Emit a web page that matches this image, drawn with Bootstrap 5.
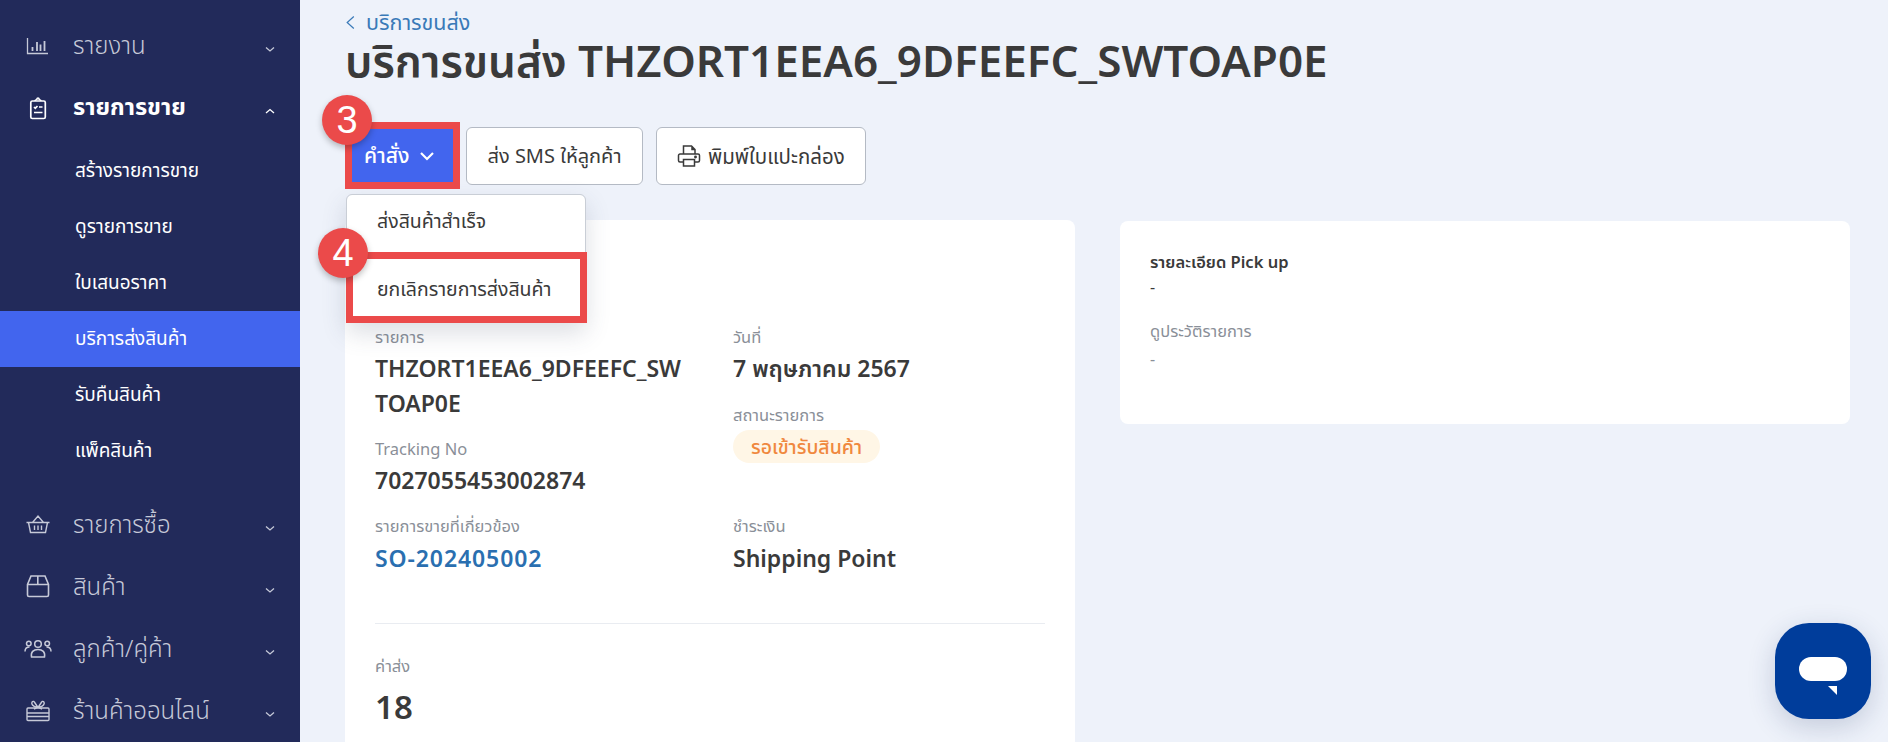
<!DOCTYPE html>
<html lang="th">
<head>
<meta charset="utf-8">
<title>บริการขนส่ง</title>
<link href="https://cdn.jsdelivr.net/npm/bootstrap@5.3.0/dist/css/bootstrap.min.css" rel="stylesheet">
<style>
html,body{height:742px;overflow:hidden}
body{font-family:"Noto Sans","Noto Sans Thai",sans-serif;background:#eef2fa;color:#3a3a3a}
.shell{height:742px;overflow:hidden}
.side{width:300px;flex:none;background:#222a5a;padding-top:15px;height:742px;overflow:hidden}
.top-item{height:62px;padding:0 24px 2px 26px;color:#c6c9d8;font-size:24px;font-weight:300;text-decoration:none}
.top-item.open{color:#fff;font-weight:700;font-size:23.5px}
.top-item .ico{width:24px;height:24px;flex:none;margin:2px 23px 0 0;overflow:visible}
.top-item .chev{width:12px;height:12px;margin:8px 0 0 auto}
.subs{padding:4px 0 15px}
.sub-item{display:flex;align-items:center;height:56px;padding:0 0 2px 75px;color:#fff;font-size:19px;font-weight:400;text-decoration:none}
.sub-item.on{background:#4265ee}
.content{flex:1;padding:10px 38px 0 45px;min-width:0}
.crumb{height:24px;font-size:21.500px;line-height:24px;color:#3a7ab8;text-decoration:none}
.crumb svg{width:11px;height:17px;margin-right:10px}
.page-title{font-size:44px;font-weight:600;line-height:50px;margin:1px 0 42px;color:#3a3a3a;white-space:nowrap}
.tools{gap:13px;height:58px;margin-bottom:35px;margin-left:1px}
.tool{height:58px;font-size:20px;font-weight:400;padding:0 20.500px;border-color:#b4bac4;background:#fff;color:#3a3a3a;border-radius:6px;white-space:nowrap}
.tool-main{background:#4265ee;border-color:#4265ee;color:#fff;font-size:21px;font-weight:500;padding:0 13px 0 17px;width:107px;border-radius:0}
.tool-main:hover{background:#4265ee;color:#fff}
.tool svg{width:24px;height:24px}
.print-btn{gap:7px;font-size:20.500px;padding:0 20px}
.hold{position:relative}
.frame{position:absolute;border:7px solid #eb4a4a;pointer-events:none;z-index:4}
.frame-a{left:-1px;top:-5px;width:115px;height:67px}
.pin{position:absolute;width:50px;height:50px;border-radius:50%;background:#eb4a4a;color:#fff;font-size:38px;display:flex;align-items:center;justify-content:center;box-shadow:0 3px 6px rgba(0,0,0,.25);z-index:5;font-family:"Liberation Sans",sans-serif}
.pin-a{left:-24px;top:-32px}
.pin-b{left:-28px;top:101px}
.menu-drop{display:block;position:absolute;left:0;top:67px;width:240px;height:129px;border-radius:6px;border-color:#c9ced6;padding:0;box-shadow:0 10px 24px rgba(60,70,100,.18);z-index:3}
.menu-line{display:block;height:51px;line-height:51px;padding:0 0 0 30px;font-size:19.500px;font-weight:400;color:#3a3a3a;text-decoration:none;white-space:nowrap}
.frame-b{left:0;top:125px;width:241px;height:71px}
.menu-line2{position:absolute;left:0;top:58px;width:100%;height:71px;line-height:71px;padding-left:30px}
.pane{flex:1 1 0;min-width:0;background:#fff;border:0;border-radius:8px}
.pane-l{padding:107px 30px 30px;height:700px}
.pane-r{padding:31px 30px 0;height:203px;margin-top:1px}
.lab{font-size:16.500px;line-height:20px;color:#8a8f98}
.val{font-size:23px;font-weight:600;line-height:35px;margin-top:3.500px;color:#3a3a3a}
.gap-top{margin-top:18.500px}
.status-lab{margin-top:19.500px}
.row-end .val{margin-top:5px}
.col-one{width:358px;flex:none;padding-right:40px;word-break:break-all}
.state{display:inline-block;background:#fff6e6;color:#f0883e;font-size:19.500px;font-weight:500;line-height:33px;height:33px;padding:0 18px;border-radius:17px;margin-top:5px;white-space:nowrap}
.link-val{color:#2a6fb0;text-decoration:none;letter-spacing:.9px}
.rule{margin:47px 0 32px;border-color:#e9ecf1;opacity:1}
.big-val{font-size:33px;font-weight:600;line-height:48px;margin-top:7px}
.head-r{font-size:16.500px;font-weight:600;line-height:20px}
.plain{font-size:16px;line-height:20px;margin-top:5px}
.chat{position:fixed;left:1775px;top:623px;width:96px;height:96px;background:#003d9b;border-radius:34px;box-shadow:0 8px 28px rgba(30,50,100,.2);border:0;padding:0}
</style>
</head>
<body>
<div class="shell d-flex">
<nav class="side">
  <a class="top-item d-flex align-items-center" href="#">
    <svg class="ico" viewBox="0 0 24 24" fill="none" stroke="currentColor" stroke-width="1.300"><path d="M1.500 4v15.500h20.500"/><path d="M6.500 17v-4M11 17V8M14.500 17v-6.500M18.500 17V7" stroke-width="1.800"/></svg>
    รายงาน
    <svg class="chev" viewBox="0 0 12 12" fill="none" stroke="currentColor" stroke-width="1.300"><path d="M2 4.500l4 3.500 4-3.500"/></svg>
  </a>
  <a class="top-item open d-flex align-items-center" href="#">
    <svg class="ico" viewBox="0 0 24 24" fill="none" stroke="currentColor" stroke-width="1.700"><rect x="4.800" y="5" width="14.500" height="17.500" rx="1.500"/><path d="M9 5c0-1 1-1.300 1.800-1.500C11 2.500 11.500 2 12 2s1 .5 1.200 1.500C14 3.700 15 4 15 5"/><path d="M8 11l1.300 1.200L11.500 10M13 11h3.500M8 16.500h8.500"/></svg>
    รายการขาย
    <svg class="chev" viewBox="0 0 12 12" fill="none" stroke="currentColor" stroke-width="1.300"><path d="M2 8l4-3.500 4 3.500"/></svg>
  </a>
  <div class="subs">
    <a class="sub-item" href="#">สร้างรายการขาย</a>
    <a class="sub-item" href="#">ดูรายการขาย</a>
    <a class="sub-item" href="#">ใบเสนอราคา</a>
    <a class="sub-item on" href="#">บริการส่งสินค้า</a>
    <a class="sub-item" href="#">รับคืนสินค้า</a>
    <a class="sub-item" href="#">แพ็คสินค้า</a>
  </div>
  <a class="top-item d-flex align-items-center" href="#">
    <svg class="ico" viewBox="0 0 24 24" fill="none" stroke="currentColor" stroke-width="1.400"><path d="M.5 9.500h23M2.500 9.500l2 10h15l2-10M6.500 9.500L12 3l5.500 6.500M8.500 12.500v4.500M12 12.500v4.500M15.500 12.500v4.500"/></svg>
    รายการซื้อ
    <svg class="chev" viewBox="0 0 12 12" fill="none" stroke="currentColor" stroke-width="1.300"><path d="M2 4.500l4 3.500 4-3.500"/></svg>
  </a>
  <a class="top-item d-flex align-items-center" href="#">
    <svg class="ico" viewBox="0 0 24 24" fill="none" stroke="currentColor" stroke-width="1.600"><path d="M1.500 9.500h21M5 1h14l3.500 8.500V20a1.500 1.500 0 0 1-1.500 1.500H3A1.500 1.500 0 0 1 1.500 20V9.500zM11.800 1v8.500"/></svg>
    สินค้า
    <svg class="chev" viewBox="0 0 12 12" fill="none" stroke="currentColor" stroke-width="1.300"><path d="M2 4.500l4 3.500 4-3.500"/></svg>
  </a>
  <a class="top-item d-flex align-items-center" href="#">
    <svg class="ico" viewBox="0 0 24 24" fill="none" stroke="currentColor" stroke-width="1.500"><circle cx="12" cy="7" r="3.300"/><circle cx="2.800" cy="6.500" r="2.300"/><circle cx="21.200" cy="6.500" r="2.300"/><path d="M5.500 20c-1-5 2-7.500 6.500-7.500s7.500 2.500 6.500 7.500zM-1 14.500c0-3 1.800-4.500 4.500-4.500M25 14.500c0-3-1.800-4.500-4.500-4.500"/></svg>
    ลูกค้า/คู่ค้า
    <svg class="chev" viewBox="0 0 12 12" fill="none" stroke="currentColor" stroke-width="1.300"><path d="M2 4.500l4 3.500 4-3.500"/></svg>
  </a>
  <a class="top-item d-flex align-items-center" href="#">
    <svg class="ico" viewBox="0 0 24 24" fill="none" stroke="currentColor" stroke-width="1.400"><rect x="1" y="9" width="22" height="12.500" rx="1"/><path d="M1 14h22M1 17.500h22M12 8.500L8 2.500M12 8.500l4-6M8 2.500C6 2 5 4 6.500 6S10 8 12 8.500M16 2.500C18 2 19 4 17.500 6S14 8 12 8.500M8 10l4-2 4 2"/></svg>
    ร้านค้าออนไลน์
    <svg class="chev" viewBox="0 0 12 12" fill="none" stroke="currentColor" stroke-width="1.300"><path d="M2 4.500l4 3.500 4-3.500"/></svg>
  </a>
</nav>
<main class="content">
  <a class="crumb d-flex align-items-center" href="#">
    <svg viewBox="0 0 10 15" fill="none" stroke="currentColor" stroke-width="1.100"><path d="M8 2L2 7.500 8 13"/></svg>บริการขนส่ง
  </a>
  <h1 class="page-title">บริการขนส่ง THZORT1EEA6_9DFEEFC_SWTOAP0E</h1>
  <div class="tools d-flex">
    <div class="hold dropdown">
      <button class="btn tool tool-main d-inline-flex align-items-center justify-content-between" type="button">คำสั่ง
        <svg viewBox="0 0 24 24" fill="none" stroke="#fff" stroke-width="2.200"><path d="M6 9l6 6 6-6"/></svg>
      </button>
      <span class="frame frame-a"></span>
      <span class="pin pin-a">3</span>
      <div class="dropdown-menu menu-drop">
        <a class="menu-line" href="#">ส่งสินค้าสำเร็จ</a>
        <a class="menu-line menu-line2" href="#">ยกเลิกรายการส่งสินค้า</a>
      </div>
      <span class="frame frame-b"></span>
      <span class="pin pin-b">4</span>
    </div>
    <button class="btn tool" type="button">ส่ง SMS ให้ลูกค้า</button>
    <button class="btn tool print-btn d-inline-flex align-items-center" type="button">
      <svg viewBox="0 0 24 24" fill="none" stroke="currentColor" stroke-width="1.500"><path d="M6.500 10V2h8l3.500 3.500V10M15 2v3.500h3M6.500 18H3a1.500 1.500 0 0 1-1.500-1.500v-5A1.500 1.500 0 0 1 3 10h18a1.500 1.500 0 0 1 1.500 1.500v5A1.500 1.500 0 0 1 21 18h-3.500M6.500 15.500h11V22h-11z"/><circle cx="18.500" cy="13" r=".7" fill="currentColor"/></svg>
      พิมพ์ใบแปะกล่อง
    </button>
  </div>
  <div class="d-flex align-items-start" style="gap:45px">
    <section class="card pane pane-l">
      <div class="d-flex">
        <div class="col-one">
          <div class="lab">รายการ</div>
          <div class="val">THZORT1EEA6_9DFEEFC_SWTOAP0E</div>
          <div class="lab gap-top">Tracking No</div>
          <div class="val">7027055453002874</div>
        </div>
        <div>
          <div class="lab">วันที่</div>
          <div class="val">7 พฤษภาคม 2567</div>
          <div class="lab status-lab">สถานะรายการ</div>
          <span class="state">รอเข้ารับสินค้า</span>
        </div>
      </div>
      <div class="d-flex gap-top row-end">
        <div class="col-one">
          <div class="lab">รายการขายที่เกี่ยวข้อง</div>
          <div class="val"><a class="link-val" href="#">SO-202405002</a></div>
        </div>
        <div>
          <div class="lab">ชำระเงิน</div>
          <div class="val">Shipping Point</div>
        </div>
      </div>
      <hr class="rule">
      <div class="lab">ค่าส่ง</div>
      <div class="big-val">18</div>
    </section>
    <section class="card pane pane-r">
      <div class="head-r">รายละเอียด Pick up</div>
      <div class="plain">-</div>
      <div class="lab" style="margin-top:24px">ดูประวัติรายการ</div>
      <div class="plain lab" style="margin-top:8px">-</div>
    </section>
  </div>
</main>
</div>
<button class="chat" type="button" aria-label="แชท">
  <svg width="96" height="96" viewBox="0 0 96 96"><rect x="24" y="34" width="48" height="24" rx="12" fill="#fff"/><path d="M53 63h9v9z" fill="#fff"/></svg>
</button>
<script src="https://cdn.jsdelivr.net/npm/bootstrap@5.3.0/dist/js/bootstrap.bundle.min.js"></script>
</body>
</html>
